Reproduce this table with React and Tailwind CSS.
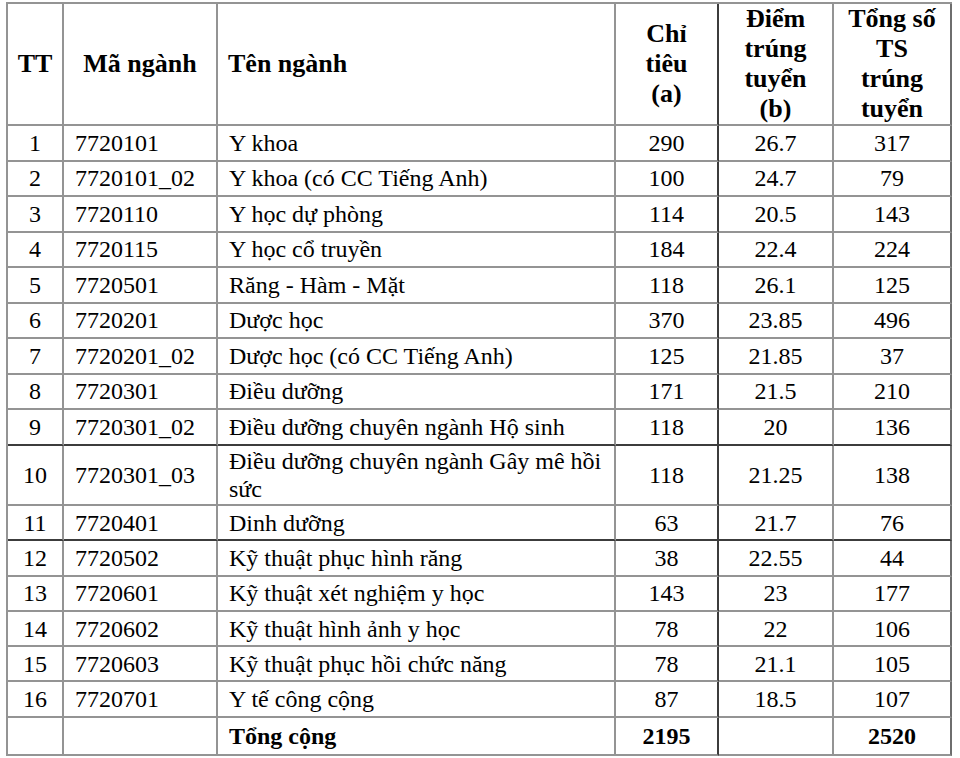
const rows = [
  ['1', '7720101', 'Y khoa', '290', '26.7', '317'],
  ['2', '7720101_02', 'Y khoa (có CC Tiếng Anh)', '100', '24.7', '79'],
  ['3', '7720110', 'Y học dự phòng', '114', '20.5', '143'],
  ['4', '7720115', 'Y học cổ truyền', '184', '22.4', '224'],
  ['5', '7720501', 'Răng - Hàm - Mặt', '118', '26.1', '125'],
  ['6', '7720201', 'Dược học', '370', '23.85', '496'],
  ['7', '7720201_02', 'Dược học (có CC Tiếng Anh)', '125', '21.85', '37'],
  ['8', '7720301', 'Điều dưỡng', '171', '21.5', '210'],
  ['9', '7720301_02', 'Điều dưỡng chuyên ngành Hộ sinh', '118', '20', '136'],
  ['10', '7720301_03', ['Điều dưỡng chuyên ngành Gây mê hồi', 'sức'], '118', '21.25', '138'],
  ['11', '7720401', 'Dinh dưỡng', '63', '21.7', '76'],
  ['12', '7720502', 'Kỹ thuật phục hình răng', '38', '22.55', '44'],
  ['13', '7720601', 'Kỹ thuật xét nghiệm y học', '143', '23', '177'],
  ['14', '7720602', 'Kỹ thuật hình ảnh y học', '78', '22', '106'],
  ['15', '7720603', 'Kỹ thuật phục hồi chức năng', '78', '21.1', '105'],
  ['16', '7720701', 'Y tế công cộng', '87', '18.5', '107'],
];

// rows whose bottom line prints darker in the scan
const darkBottom = ['9', '11'];

const cell = 'border-r-2 border-b-2 border-[#949494] align-middle';

function rowHeight(tt) {
  if (tt === '10') return 'h-[60.5px]';
  if (Number(tt) >= 11) return 'h-[35.3px]';
  return 'h-[35.5px]';
}

export default function App() {
  return (
    <div className="w-[960px] h-[758px] bg-white overflow-hidden pt-[2px] pl-[6px] [font-family:'Liberation_Serif','Times_New_Roman',serif] text-black">
      <table className="table-fixed w-[946px] border-separate border-spacing-0 border-l-2 border-t-2 border-[#949494]">
        <colgroup>
          <col className="w-[56px]" />
          <col className="w-[154px]" />
          <col className="w-[398px]" />
          <col className="w-[103px]" />
          <col className="w-[115px]" />
          <col className="w-[118px]" />
        </colgroup>
        <thead>
          <tr className="text-[26px] font-bold leading-[30px]">
            <th className={`${cell} h-[122px] text-center`}>TT</th>
            <th className={`${cell} text-center`}>Mã ngành</th>
            <th className={`${cell} text-left pl-[10px]`}>Tên ngành</th>
            <th className={`${cell} border-r-[#3c3c3c] text-center`}>
              Chỉ<br />tiêu<br />(a)
            </th>
            <th className={`${cell} text-center`}>
              Điểm<br />trúng<br />tuyển<br />(b)
            </th>
            <th className={`${cell} border-r-[#6e6e6e] text-center`}>
              Tổng số<br />TS<br />trúng<br />tuyển
            </th>
          </tr>
        </thead>
        <tbody className="text-[24px]">
          {rows.map(([tt, code, name, target, score, total]) => {
            const dark = darkBottom.includes(tt) ? 'border-b-[#3c3c3c]' : '';
            return (
              <tr key={tt} className={rowHeight(tt)}>
                <td className={`${cell} ${dark} text-center leading-none`}>{tt}</td>
                <td className={`${cell} ${dark} pl-[11px] leading-none`}>{code}</td>
                <td className={`${cell} ${dark} pl-[11px] pr-1 leading-[28px] whitespace-nowrap`}>
                  {Array.isArray(name) ? (
                    <>
                      {name[0]}
                      <br />
                      {name[1]}
                    </>
                  ) : (
                    name
                  )}
                </td>
                <td className={`${cell} ${dark} border-r-[#3c3c3c] text-center leading-none`}>{target}</td>
                <td className={`${cell} ${dark} text-center leading-none`}>{score}</td>
                <td className={`${cell} ${dark} border-r-[#6e6e6e] text-center leading-none`}>{total}</td>
              </tr>
            );
          })}
          <tr className="h-[38px] font-bold">
            <td className={cell}></td>
            <td className={cell}></td>
            <td className={`${cell} pl-[11px] leading-none`}>Tổng cộng</td>
            <td className={`${cell} border-r-[#3c3c3c] text-center leading-none`}>2195</td>
            <td className={cell}></td>
            <td className={`${cell} border-r-[#6e6e6e] text-center leading-none`}>2520</td>
          </tr>
        </tbody>
      </table>
    </div>
  );
}
